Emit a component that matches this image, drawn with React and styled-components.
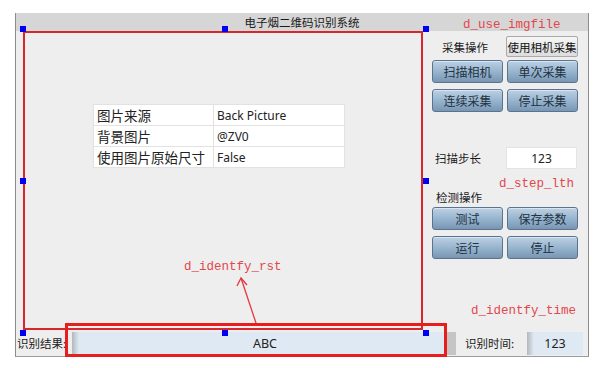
import React from 'react';
import styled, { createGlobalStyle } from 'styled-components';

const GlobalStyle = createGlobalStyle`
  body {
    margin: 0;
    background: #ffffff;
    font-family: "Noto Sans", "Noto Sans CJK SC", sans-serif;
  }
`;

const cjk = `"Noto Sans CJK SC", "Noto Sans", sans-serif`;

const Page = styled.div`
  padding: 13px 0 0 15px;
`;

const Window = styled.div`
  position: relative;
  width: 574px;
  box-sizing: border-box;
  display: flex;
  flex-direction: column;
  background: #efeeef;
  border-left: 1px solid #8c8c8c;
  border-right: 1px solid #8c8c8c;
  border-bottom: 1px solid #9c9c9c;
`;

const TitleBar = styled.div`
  height: 18px;
  display: flex;
  align-items: center;
  justify-content: center;
  background: #d6d6d6;
  font-family: ${cjk};
  font-size: 11.5px;
  color: #1a1a1a;
`;

const Body = styled.div`
  display: flex;
  height: 299px;
`;

const Canvas = styled.div`
  margin-left: 7px;
  width: 400px;
  box-sizing: border-box;
  border: 2px solid #d8262c;
  background: #efeeef;
  padding: 71px 0 0 68px;
`;

const PropTable = styled.table`
  border-collapse: collapse;
  background: #ffffff;
  width: 252px;

  td {
    height: 20px;
    padding: 0 0 0 3px;
    border: 1px solid #e2e2e2;
    font-size: 12px;
    color: #222;
    font-family: "Noto Sans", sans-serif;
    white-space: nowrap;
  }

  td:first-child {
    width: 116px;
    font-family: ${cjk};
    font-size: 13.5px;
  }
`;

const SidePanel = styled.div`
  flex: 1;
  display: flex;
  flex-direction: column;
  padding: 5px 0 0 9px;
`;

const Row = styled.div`
  display: flex;
  align-items: center;
  height: ${(p) => p.$h || 21}px;
  margin-top: ${(p) => p.$mt || 0}px;
`;

const Label = styled.div`
  width: ${(p) => p.$w || 74}px;
  padding-left: ${(p) => p.$pl || 0}px;
  box-sizing: border-box;
  flex-shrink: 0;
  font-family: ${cjk};
  font-size: 11.5px;
  color: #1a1a1a;
  white-space: nowrap;
`;

const SectionLabel = styled(Label)`
  margin-top: ${(p) => p.$mt || 0}px;
  height: 14px;
  line-height: 14px;
`;

const GreyButton = styled.div`
  width: 72px;
  height: 21px;
  box-sizing: border-box;
  display: flex;
  align-items: center;
  justify-content: center;
  background: linear-gradient(#f6f6f6, #dcdcdc);
  border: 1px solid #a9a9a9;
  border-radius: 2px;
  font-family: ${cjk};
  font-size: 11.5px;
  color: #111;
  white-space: nowrap;
`;

const ButtonGrid = styled.div`
  display: grid;
  grid-template-columns: 71px 71px;
  column-gap: 4px;
  row-gap: 6px;
  margin-top: ${(p) => p.$mt || 0}px;
`;

const BlueButton = styled.div`
  height: 23px;
  box-sizing: border-box;
  display: flex;
  align-items: center;
  justify-content: center;
  background: linear-gradient(#bcd0e3, #98b5cf 50%, #7896b3);
  border: 1px solid #5a7490;
  border-radius: 3px;
  box-shadow: inset 0 1px 0 rgba(255, 255, 255, 0.45);
  font-family: ${cjk};
  font-size: 12px;
  color: #22313f;
`;

const ValueBox = styled.div`
  width: 71px;
  height: 22px;
  box-sizing: border-box;
  display: flex;
  align-items: center;
  justify-content: center;
  background: #ffffff;
  border: 1px solid #e4e4e4;
  font-size: 12px;
  color: #222;
`;

const BottomRow = styled.div`
  display: flex;
  align-items: center;
  height: 26px;
`;

const Field = styled.div`
  width: ${(p) => p.$w}px;
  height: 23px;
  flex-shrink: 0;
  box-sizing: border-box;
  display: flex;
  align-items: center;
  justify-content: center;
  padding-left: ${(p) => p.$pl || 0}px;
  background: linear-gradient(90deg, #b3b7bb 0, #dfe9f4 7px, #dfe9f4);
  font-size: 12.5px;
  color: #222;
`;

const Shade = styled.div`
  width: 9px;
  height: 23px;
  margin-left: 1px;
  margin-right: 9px;
  background: #c5c5c5;
`;

const Handle = styled.div`
  position: absolute;
  left: ${(p) => p.$x}px;
  top: ${(p) => p.$y}px;
  width: 6px;
  height: 6px;
  background: #0000f0;
`;

const Note = styled.div`
  position: absolute;
  left: ${(p) => p.$x}px;
  top: ${(p) => p.$y}px;
  font-family: "Liberation Mono", monospace;
  font-size: 12.5px;
  line-height: 14px;
  color: #e2474c;
  white-space: nowrap;
`;

const Highlight = styled.div`
  position: absolute;
  left: 49px;
  top: 310px;
  width: 382px;
  height: 34px;
  box-sizing: border-box;
  border: 3px solid #e61e1e;
  pointer-events: none;
`;

const ArrowLayer = styled.svg`
  position: absolute;
  left: 0;
  top: 0;
  overflow: visible;
  pointer-events: none;
`;

const handles = [
  [4, 13], [206, 13], [407, 13],
  [4, 165], [407, 165],
  [4, 317], [206, 317], [407, 317],
];

export default function App() {
  return (
    <Page>
      <GlobalStyle />
      <Window>
        <TitleBar>电子烟二维码识别系统</TitleBar>
        <Body>
          <Canvas>
            <PropTable>
              <tbody>
                <tr><td>图片来源</td><td>Back Picture</td></tr>
                <tr><td>背景图片</td><td>@ZV0</td></tr>
                <tr><td>使用图片原始尺寸</td><td>False</td></tr>
              </tbody>
            </PropTable>
          </Canvas>
          <SidePanel>
            <Row $h={21}>
              <Label $pl={10}>采集操作</Label>
              <GreyButton>使用相机采集</GreyButton>
            </Row>
            <ButtonGrid $mt={3}>
              <BlueButton>扫描相机</BlueButton>
              <BlueButton>单次采集</BlueButton>
              <BlueButton>连续采集</BlueButton>
              <BlueButton>停止采集</BlueButton>
            </ButtonGrid>
            <Row $h={22} $mt={35}>
              <Label $pl={3}>扫描步长</Label>
              <ValueBox>123</ValueBox>
            </Row>
            <SectionLabel $pl={4} $mt={21}>检测操作</SectionLabel>
            <ButtonGrid $mt={3}>
              <BlueButton>测试</BlueButton>
              <BlueButton>保存参数</BlueButton>
              <BlueButton>运行</BlueButton>
              <BlueButton>停止</BlueButton>
            </ButtonGrid>
          </SidePanel>
        </Body>
        <BottomRow>
          <Label $w={56} $pl={1}>识别结果:</Label>
          <Field $w={374} $pl={12}>ABC</Field>
          <Shade />
          <Label $w={62}>识别时间:</Label>
          <Field $w={56}>123</Field>
        </BottomRow>

        {handles.map(([x, y]) => (
          <Handle key={`${x}-${y}`} $x={x} $y={y} />
        ))}
        <Highlight />
        <Note $x={447} $y={5}>d_use_imgfile</Note>
        <Note $x={483} $y={164}>d_step_lth</Note>
        <Note $x={168} $y={247}>d_identfy_rst</Note>
        <Note $x={455} $y={291}>d_identfy_time</Note>
        <ArrowLayer width="574" height="344">
          <g stroke="#e2373c" strokeWidth="1.3" fill="none">
            <line x1="240" y1="310" x2="225" y2="265" />
            <polyline points="221,273 225,265 231,272" />
          </g>
        </ArrowLayer>
      </Window>
    </Page>
  );
}
